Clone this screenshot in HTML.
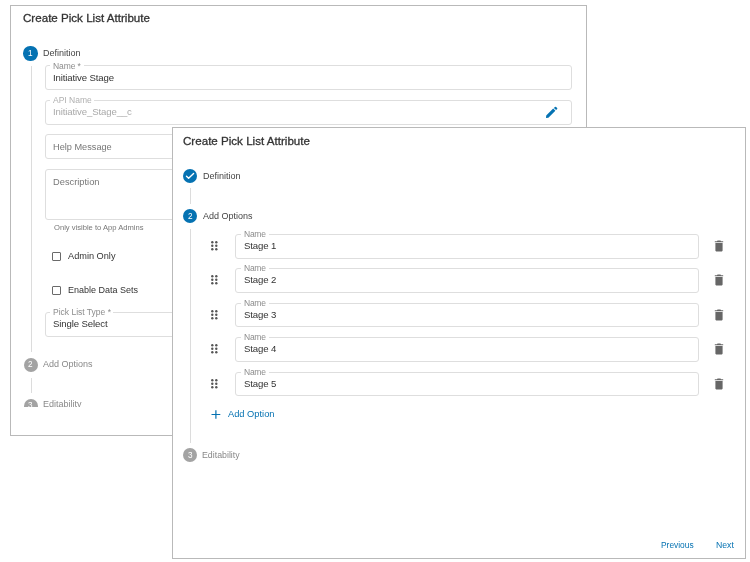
<!DOCTYPE html>
<html><head><meta charset="utf-8">
<style>
html,body{margin:0;padding:0;background:#fff;width:750px;height:562px;overflow:hidden;position:relative}
#wrap{position:absolute;left:0;top:0;width:750px;height:562px}
*{box-sizing:border-box}
.m{position:absolute;background:#fff;border:1px solid #b9b9b9}
.t{position:absolute;will-change:transform;font-family:"Liberation Sans",sans-serif;white-space:nowrap;line-height:1;color:#333}
.in{position:absolute;border:1px solid #dedede;border-radius:3px;background:#fff}
.gap{position:absolute;background:#fff;height:3px}
.circ{position:absolute;border-radius:50%;background:#0572b2}
.grey{background:#a3a3a3}
.vl{position:absolute;width:1px;background:#dcdcdc}
.cb{position:absolute;border:1px solid #6a6a6a;border-radius:1px}
.clip{position:absolute;left:0;top:0;width:750px;overflow:hidden}
svg{position:absolute}
</style></head><body>
<div id="wrap">
<div class="m" style="left:10px;top:5px;width:577.00px;height:431.00px;"></div>
<div class="clip" style="height:406.5px">
<div id="t0" class="t" style="left:23.40px;top:11.58px;font-size:11.6px;color:#333;-webkit-text-stroke:0.3px #333">Create Pick List Attribute</div>
<div class="circ" style="left:23.4px;top:46.4px;width:14.3px;height:14.3px"></div>
<div id="t1" class="t" style="left:28.20px;top:50.06px;font-size:8.2px;color:#fff;">1</div>
<div id="t2" class="t" style="left:43.00px;top:49.28px;font-size:9.0px;color:#444;">Definition</div>
<div class="vl" style="left:31px;top:65.5px;height:286.5px"></div>
<div class="in" style="left:45px;top:65px;width:527.00px;height:25.00px;"></div>
<div class="gap" style="left:50px;top:64px;width:34px"></div>
<div id="t3" class="t" style="left:53.40px;top:62.00px;font-size:8.5px;color:#8c8c8c;letter-spacing:-0.1px">Name *</div>
<div id="t4" class="t" style="left:53.40px;top:72.67px;font-size:9.6px;color:#333;letter-spacing:-0.12px">Initiative Stage</div>
<div class="in" style="left:45px;top:100px;width:527.00px;height:25.00px;"></div>
<div class="gap" style="left:50px;top:99px;width:44px"></div>
<div id="t5" class="t" style="left:53.40px;top:96.20px;font-size:8.5px;color:#b0b0b0;">API Name</div>
<div id="t6" class="t" style="left:53.40px;top:107.27px;font-size:9.6px;color:#a9a9a9;letter-spacing:-0.12px">Initiative_Stage__c</div>
<svg style="left:545px;top:106px" width="13" height="13" viewBox="0 0 13 13"><path d="M1 12 L1.2 9.6 L8.2 2.6 L10.4 4.8 L3.4 11.8 Z" fill="#0572b2"/><path d="M8.9 1.9 L9.9 0.9 Q10.5 0.4 11.1 0.9 L12.1 1.9 Q12.6 2.5 12.1 3.1 L11.1 4.1 Z" fill="#0572b2"/></svg>
<div class="in" style="left:45px;top:134px;width:527.00px;height:25.00px;"></div>
<div id="t7" class="t" style="left:53.00px;top:142.71px;font-size:9.2px;color:#777;">Help Message</div>
<div class="in" style="left:45px;top:169px;width:527.00px;height:51.00px;"></div>
<div id="t8" class="t" style="left:53.00px;top:177.58px;font-size:9.3px;color:#777;">Description</div>
<div id="t9" class="t" style="left:53.70px;top:224.42px;font-size:7.6px;color:#777;">Only visible to App Admins</div>
<div class="cb" style="left:52px;top:252px;width:9.00px;height:9.00px;"></div>
<div id="t10" class="t" style="left:68.00px;top:252.36px;font-size:9.2px;color:#333;">Admin Only</div>
<div class="cb" style="left:52px;top:286px;width:9.00px;height:9.00px;"></div>
<div id="t11" class="t" style="left:68.00px;top:285.73px;font-size:9.0px;color:#333;">Enable Data Sets</div>
<div class="in" style="left:45px;top:312px;width:527.00px;height:25.00px;"></div>
<div class="gap" style="left:50px;top:311px;width:63px"></div>
<div id="t12" class="t" style="left:53.40px;top:308.15px;font-size:8.5px;color:#8c8c8c;">Pick List Type *</div>
<div id="t13" class="t" style="left:53.40px;top:319.37px;font-size:9.6px;color:#333;letter-spacing:-0.12px">Single Select</div>
<div class="circ grey" style="left:23.5px;top:357.5px;width:14.5px;height:14.5px"></div>
<div id="t14" class="t" style="left:28.20px;top:361.06px;font-size:8.2px;color:#fff;">2</div>
<div id="t15" class="t" style="left:43.10px;top:360.38px;font-size:9.0px;color:#888;">Add Options</div>
<div class="vl" style="left:31px;top:377.5px;height:15.5px"></div>
<div class="circ grey" style="left:23.5px;top:398.5px;width:14.5px;height:14.5px"></div>
<div id="t16" class="t" style="left:28.20px;top:402.06px;font-size:8.2px;color:#fff;">3</div>
<div id="t17" class="t" style="left:43.10px;top:400.38px;font-size:9.0px;color:#888;">Editability</div>
</div>
<div class="m" style="left:172px;top:127px;width:574.00px;height:432.00px;"></div>
<div id="t18" class="t" style="left:183.00px;top:134.58px;font-size:11.6px;color:#333;-webkit-text-stroke:0.3px #333">Create Pick List Attribute</div>
<div class="circ" style="left:182.8px;top:169px;width:14.2px;height:14.2px"></div>
<svg style="left:182px;top:168px" width="16" height="16" viewBox="0 0 16 16"><path d="M4.5 8.3 L6.6 10.3 L11.6 5.5" stroke="#fff" stroke-width="1.4" fill="none" stroke-linecap="round" stroke-linejoin="round"/></svg>
<div id="t19" class="t" style="left:202.60px;top:171.98px;font-size:9.0px;color:#444;">Definition</div>
<div class="vl" style="left:190px;top:188px;height:15.5px"></div>
<div class="circ" style="left:182.8px;top:209px;width:14.2px;height:14.2px"></div>
<div id="t20" class="t" style="left:187.90px;top:212.86px;font-size:8.2px;color:#fff;">2</div>
<div id="t21" class="t" style="left:202.60px;top:211.58px;font-size:9.0px;color:#444;">Add Options</div>
<div class="vl" style="left:190px;top:229px;height:213.5px"></div>
<div class="in" style="left:235px;top:234px;width:464.00px;height:24.50px;"></div>
<div class="gap" style="left:241px;top:233px;width:28px"></div>
<div id="t22" class="t" style="left:243.50px;top:229.80px;font-size:8.5px;color:#8c8c8c;letter-spacing:-0.25px">Name</div>
<div id="t23" class="t" style="left:244.00px;top:240.97px;font-size:9.6px;color:#333;letter-spacing:-0.12px">Stage 1</div>
<svg style="left:210.5px;top:240.90px" width="8" height="10" viewBox="0 0 8 10"><circle cx="1.3" cy="1.3" r="1.2" fill="#555"/><circle cx="1.3" cy="4.8" r="1.2" fill="#555"/><circle cx="1.3" cy="8.3" r="1.2" fill="#555"/><circle cx="5.3" cy="1.3" r="1.2" fill="#555"/><circle cx="5.3" cy="4.8" r="1.2" fill="#555"/><circle cx="5.3" cy="8.3" r="1.2" fill="#555"/></svg>
<svg style="left:714px;top:239.70px" width="10" height="12" viewBox="0 0 10 12"><path d="M3.5 0.6 H6.5 L7 1.2 H9.2 V2.2 H0.8 V1.2 H3 Z" fill="#666"/><path d="M1.4 3 H8.6 V10.6 Q8.6 11.4 7.8 11.4 H2.2 Q1.4 11.4 1.4 10.6 Z" fill="#666"/></svg>
<div class="in" style="left:235px;top:268px;width:464.00px;height:25.00px;"></div>
<div class="gap" style="left:241px;top:267px;width:28px"></div>
<div id="t24" class="t" style="left:243.50px;top:264.30px;font-size:8.5px;color:#8c8c8c;letter-spacing:-0.25px">Name</div>
<div id="t25" class="t" style="left:244.00px;top:275.47px;font-size:9.6px;color:#333;letter-spacing:-0.12px">Stage 2</div>
<svg style="left:210.5px;top:275.40px" width="8" height="10" viewBox="0 0 8 10"><circle cx="1.3" cy="1.3" r="1.2" fill="#555"/><circle cx="1.3" cy="4.8" r="1.2" fill="#555"/><circle cx="1.3" cy="8.3" r="1.2" fill="#555"/><circle cx="5.3" cy="1.3" r="1.2" fill="#555"/><circle cx="5.3" cy="4.8" r="1.2" fill="#555"/><circle cx="5.3" cy="8.3" r="1.2" fill="#555"/></svg>
<svg style="left:714px;top:274.20px" width="10" height="12" viewBox="0 0 10 12"><path d="M3.5 0.6 H6.5 L7 1.2 H9.2 V2.2 H0.8 V1.2 H3 Z" fill="#666"/><path d="M1.4 3 H8.6 V10.6 Q8.6 11.4 7.8 11.4 H2.2 Q1.4 11.4 1.4 10.6 Z" fill="#666"/></svg>
<div class="in" style="left:235px;top:303px;width:464.00px;height:24.00px;"></div>
<div class="gap" style="left:241px;top:302px;width:28px"></div>
<div id="t26" class="t" style="left:243.50px;top:298.80px;font-size:8.5px;color:#8c8c8c;letter-spacing:-0.25px">Name</div>
<div id="t27" class="t" style="left:244.00px;top:309.97px;font-size:9.6px;color:#333;letter-spacing:-0.12px">Stage 3</div>
<svg style="left:210.5px;top:309.90px" width="8" height="10" viewBox="0 0 8 10"><circle cx="1.3" cy="1.3" r="1.2" fill="#555"/><circle cx="1.3" cy="4.8" r="1.2" fill="#555"/><circle cx="1.3" cy="8.3" r="1.2" fill="#555"/><circle cx="5.3" cy="1.3" r="1.2" fill="#555"/><circle cx="5.3" cy="4.8" r="1.2" fill="#555"/><circle cx="5.3" cy="8.3" r="1.2" fill="#555"/></svg>
<svg style="left:714px;top:308.70px" width="10" height="12" viewBox="0 0 10 12"><path d="M3.5 0.6 H6.5 L7 1.2 H9.2 V2.2 H0.8 V1.2 H3 Z" fill="#666"/><path d="M1.4 3 H8.6 V10.6 Q8.6 11.4 7.8 11.4 H2.2 Q1.4 11.4 1.4 10.6 Z" fill="#666"/></svg>
<div class="in" style="left:235px;top:337px;width:464.00px;height:25.00px;"></div>
<div class="gap" style="left:241px;top:336px;width:28px"></div>
<div id="t28" class="t" style="left:243.50px;top:333.30px;font-size:8.5px;color:#8c8c8c;letter-spacing:-0.25px">Name</div>
<div id="t29" class="t" style="left:244.00px;top:344.47px;font-size:9.6px;color:#333;letter-spacing:-0.12px">Stage 4</div>
<svg style="left:210.5px;top:344.40px" width="8" height="10" viewBox="0 0 8 10"><circle cx="1.3" cy="1.3" r="1.2" fill="#555"/><circle cx="1.3" cy="4.8" r="1.2" fill="#555"/><circle cx="1.3" cy="8.3" r="1.2" fill="#555"/><circle cx="5.3" cy="1.3" r="1.2" fill="#555"/><circle cx="5.3" cy="4.8" r="1.2" fill="#555"/><circle cx="5.3" cy="8.3" r="1.2" fill="#555"/></svg>
<svg style="left:714px;top:343.20px" width="10" height="12" viewBox="0 0 10 12"><path d="M3.5 0.6 H6.5 L7 1.2 H9.2 V2.2 H0.8 V1.2 H3 Z" fill="#666"/><path d="M1.4 3 H8.6 V10.6 Q8.6 11.4 7.8 11.4 H2.2 Q1.4 11.4 1.4 10.6 Z" fill="#666"/></svg>
<div class="in" style="left:235px;top:372px;width:464.00px;height:24.20px;"></div>
<div class="gap" style="left:241px;top:371px;width:28px"></div>
<div id="t30" class="t" style="left:243.50px;top:367.80px;font-size:8.5px;color:#8c8c8c;letter-spacing:-0.25px">Name</div>
<div id="t31" class="t" style="left:244.00px;top:378.97px;font-size:9.6px;color:#333;letter-spacing:-0.12px">Stage 5</div>
<svg style="left:210.5px;top:378.90px" width="8" height="10" viewBox="0 0 8 10"><circle cx="1.3" cy="1.3" r="1.2" fill="#555"/><circle cx="1.3" cy="4.8" r="1.2" fill="#555"/><circle cx="1.3" cy="8.3" r="1.2" fill="#555"/><circle cx="5.3" cy="1.3" r="1.2" fill="#555"/><circle cx="5.3" cy="4.8" r="1.2" fill="#555"/><circle cx="5.3" cy="8.3" r="1.2" fill="#555"/></svg>
<svg style="left:714px;top:377.70px" width="10" height="12" viewBox="0 0 10 12"><path d="M3.5 0.6 H6.5 L7 1.2 H9.2 V2.2 H0.8 V1.2 H3 Z" fill="#666"/><path d="M1.4 3 H8.6 V10.6 Q8.6 11.4 7.8 11.4 H2.2 Q1.4 11.4 1.4 10.6 Z" fill="#666"/></svg>
<svg style="left:210.5px;top:410px" width="10" height="10" viewBox="0 0 10 10"><path d="M4.9 0.2 V8.8 M0.5 4.5 H9.3" stroke="#0572b2" stroke-width="1.2"/></svg>
<div id="t32" class="t" style="left:228.00px;top:410.03px;font-size:9.3px;color:#0572b2;">Add Option</div>
<div class="circ grey" style="left:182.9px;top:448.1px;width:14.2px;height:14.4px"></div>
<div id="t33" class="t" style="left:187.90px;top:452.06px;font-size:8.2px;color:#fff;">3</div>
<div id="t34" class="t" style="left:201.50px;top:451.15px;font-size:8.8px;color:#888;">Editability</div>
<div id="t35" class="t" style="left:660.80px;top:541.39px;font-size:8.4px;color:#0572b2;">Previous</div>
<div id="t36" class="t" style="left:715.70px;top:541.14px;font-size:8.7px;color:#0572b2;">Next</div>
</div></body></html>
